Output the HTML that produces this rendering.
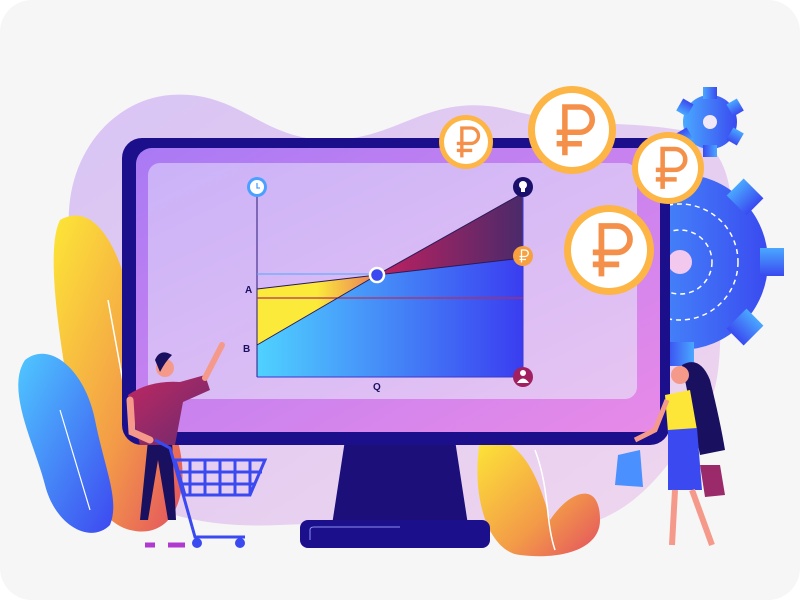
<!DOCTYPE html>
<html><head><meta charset="utf-8"><style>
html,body{margin:0;padding:0;background:#fff;width:800px;height:600px;overflow:hidden}
svg{display:block}
text{font-family:"Liberation Sans",sans-serif;font-weight:bold}
</style></head><body>
<svg width="800" height="600" viewBox="0 0 800 600" xmlns="http://www.w3.org/2000/svg">
<defs>
<linearGradient id="blob" x1="0" y1="0" x2="1" y2="1"><stop offset="0" stop-color="#d8c4f4"/><stop offset="1" stop-color="#f0d6ee"/></linearGradient>
<linearGradient id="yl" x1="0" y1="0" x2="1" y2="1"><stop offset="0" stop-color="#fde637"/><stop offset="0.6" stop-color="#f39a48"/><stop offset="1" stop-color="#e35060"/></linearGradient>
<linearGradient id="bl" x1="0" y1="0" x2="1" y2="1"><stop offset="0" stop-color="#4fc8ff"/><stop offset="1" stop-color="#3d48f0"/></linearGradient>
<linearGradient id="scr" x1="0" y1="0" x2="1" y2="1"><stop offset="0" stop-color="#cbb2f8"/><stop offset="1" stop-color="#e6c4f2"/></linearGradient>
<linearGradient id="frm" x1="0" y1="0" x2="1" y2="1"><stop offset="0" stop-color="#a97af5"/><stop offset="1" stop-color="#e88ae8"/></linearGradient>
<linearGradient id="area" x1="0" y1="0" x2="1" y2="0"><stop offset="0" stop-color="#4fd2ff"/><stop offset="1" stop-color="#3a3df0"/></linearGradient>
<linearGradient id="yel" x1="0" y1="0" x2="1" y2="0"><stop offset="0" stop-color="#fbea3a"/><stop offset="0.5" stop-color="#fbea3a"/><stop offset="1" stop-color="#ea7a5a"/></linearGradient>
<linearGradient id="mag" x1="0" y1="0" x2="1" y2="0"><stop offset="0" stop-color="#c02060"/><stop offset="1" stop-color="#4a2a6a"/></linearGradient>
<linearGradient id="gear" x1="0" y1="0" x2="1" y2="0"><stop offset="0" stop-color="#4aa8ff"/><stop offset="1" stop-color="#3a4af0"/></linearGradient>
<linearGradient id="shirt" x1="0" y1="0" x2="1" y2="1"><stop offset="0" stop-color="#c02860"/><stop offset="1" stop-color="#6a2a70"/></linearGradient>
<path id="rub" d="M-0.22 0.55 V-0.5 H0.1 A0.27 0.27 0 0 1 0.1 0.05 H-0.4 M-0.4 0.3 H0.15" fill="none" stroke="#f5904a" stroke-width="0.12"/>
</defs>
<rect width="800" height="600" rx="32" fill="#f6f6f6"/>
<path d="M70 240 C60 160 110 100 170 95 C240 90 260 140 330 140 C400 140 430 90 510 110 C580 128 620 120 680 130 C730 140 740 200 725 260 C715 320 730 380 700 420 C670 460 640 520 560 530 C480 540 380 520 280 525 C180 530 90 500 70 420 C55 360 78 300 70 240Z" fill="url(#blob)"/>
<path d="M60 220 C95 200 120 250 130 300 C140 360 170 400 180 450 C190 500 170 540 130 530 C90 520 80 460 70 400 C60 340 45 250 60 220Z" fill="url(#yl)"/>
<path d="M108 300 L130 420" stroke="#fff" stroke-width="1.5" fill="none"/>
<path d="M25 360 C50 340 85 370 95 420 C105 470 120 500 110 525 C90 545 55 525 45 485 C35 445 5 390 25 360Z" fill="url(#bl)"/>
<path d="M60 410 L90 510" stroke="#fff" stroke-width="1.2" fill="none"/>
<path d="M480 440 C520 430 540 480 550 520 C570 490 600 480 600 520 C600 550 560 560 520 555 C490 552 470 500 480 440Z" fill="url(#yl)"/>
<path d="M535 450 C550 490 545 520 555 550" stroke="#fff" stroke-width="1.5" fill="none"/>
<g transform="translate(680,262)">
<circle r="88" fill="url(#gear)"/>
<g fill="url(#gear)">
<rect x="-14" y="-104" width="28" height="24"/><rect x="-14" y="-104" width="28" height="24" transform="rotate(45)"/><rect x="-14" y="-104" width="28" height="24" transform="rotate(90)"/><rect x="-14" y="-104" width="28" height="24" transform="rotate(135)"/><rect x="-14" y="-104" width="28" height="24" transform="rotate(180)"/>
</g>
<circle r="58" fill="none" stroke="#fff" stroke-width="1.5" stroke-dasharray="5 4"/>
<circle r="32" fill="none" stroke="#fff" stroke-width="1.5" stroke-dasharray="5 4"/>
<circle r="12" fill="#f3c8ef"/>
</g>
<g transform="translate(710,122)">
<circle r="27" fill="url(#gear)"/>
<g fill="url(#gear)"><rect x="-7" y="-35" width="14" height="12"/><rect x="-7" y="-35" width="14" height="12" transform="rotate(60)"/><rect x="-7" y="-35" width="14" height="12" transform="rotate(120)"/><rect x="-7" y="-35" width="14" height="12" transform="rotate(180)"/><rect x="-7" y="-35" width="14" height="12" transform="rotate(240)"/><rect x="-7" y="-35" width="14" height="12" transform="rotate(300)"/></g>
<circle r="7" fill="#f0e8f8"/>
</g>
<path d="M345 440 L455 440 L468 525 L332 525Z" fill="#1c0f7a"/>
<rect x="300" y="520" width="190" height="28" rx="8" fill="#1c0f8c"/>
<path d="M310 540 L310 530 Q310 527 314 527 L400 527" stroke="#8a8ff0" stroke-width="1" fill="none"/>
<rect x="122" y="138" width="548" height="307" rx="20" fill="#1c0f8c"/>
<rect x="136" y="148" width="524" height="284" rx="16" fill="url(#frm)"/>
<rect x="148" y="163" width="489" height="236" rx="12" fill="url(#scr)"/>
<polygon points="257,345 377,275 523,258 523,377 257,377" fill="url(#area)"/>
<polygon points="257,289 377,275 257,345" fill="url(#yel)"/>
<polygon points="377,275 523,193 523,258" fill="url(#mag)"/>
<line x1="257" y1="187" x2="257" y2="377" stroke="#2a1a7a" stroke-width="1"/>
<line x1="257" y1="377" x2="523" y2="377" stroke="#3a3ad0" stroke-width="1"/>
<line x1="523" y1="190" x2="523" y2="377" stroke="#3a3ad0" stroke-width="1"/>
<line x1="257" y1="298" x2="523" y2="298" stroke="#b03060" stroke-width="1.2"/>
<line x1="257" y1="274" x2="377" y2="274" stroke="#4fa8ff" stroke-width="1"/>
<line x1="257" y1="289" x2="377" y2="275" stroke="#2a1a5a" stroke-width="1"/>
<line x1="257" y1="345" x2="377" y2="275" stroke="#2a1a5a" stroke-width="1"/>
<line x1="377" y1="275" x2="523" y2="193" stroke="#2a1a5a" stroke-width="1"/>
<line x1="377" y1="275" x2="523" y2="258" stroke="#2a1a5a" stroke-width="1"/>
<circle cx="377" cy="275" r="7" fill="#3a4af0" stroke="#fff" stroke-width="2.5"/>
<circle cx="257" cy="187" r="10" fill="#4aa0ff"/><circle cx="257" cy="187" r="7" fill="#fff"/><path d="M257 183 V188 H260" stroke="#4aa0ff" stroke-width="1.3" fill="none"/>
<circle cx="523" cy="187" r="10" fill="#1a0f6a"/><circle cx="523" cy="185" r="4" fill="#fff"/><rect x="521" y="188" width="4" height="4" fill="#fff"/>
<circle cx="523" cy="256" r="10" fill="#f7a040"/>
<path d="M521.5 262.5 V250 H525 A3.2 3.2 0 0 1 525 256.5 H519.5 M519.5 259.5 H526" fill="none" stroke="#fff" stroke-width="1.3"/>
<circle cx="523" cy="377" r="10" fill="#a02060"/><circle cx="523" cy="373" r="3" fill="#fff"/><path d="M517 383 Q523 374 529 383Z" fill="#fff"/>
<text x="245" y="293" font-size="10" fill="#1a1060">A</text>
<text x="243" y="352" font-size="10" fill="#1a1060">B</text>
<text x="373" y="390" font-size="10" fill="#1a1060">Q</text>
<circle cx="466" cy="142" r="27" fill="#fdb545"/><circle cx="466" cy="142" r="22" fill="#fff"/><use href="#rub" transform="translate(468,142) scale(28)"/>
<circle cx="572" cy="130" r="44" fill="#fdb545"/><circle cx="572" cy="130" r="37" fill="#fff"/><use href="#rub" transform="translate(575,130) scale(46)"/>
<circle cx="668" cy="168" r="36" fill="#fdb545"/><circle cx="668" cy="168" r="30" fill="#fff"/><use href="#rub" transform="translate(671,168) scale(38)"/>
<circle cx="609" cy="250" r="45" fill="#fdb545"/><circle cx="609" cy="250" r="38" fill="#fff"/><use href="#rub" transform="translate(612,250) scale(48)"/>
<path d="M148 440 L140 520 L148 520 L158 460 L168 520 L176 520 L172 440Z" fill="#1a1060"/>
<path d="M128 395 Q150 380 180 382 L205 375 L210 390 L183 402 L175 445 L140 445Z" fill="url(#shirt)"/>
<path d="M205 378 L222 345" stroke="#f59a8a" stroke-width="6" stroke-linecap="round"/>
<circle cx="165" cy="368" r="9" fill="#f59a8a"/>
<path d="M155 360 Q160 348 172 355 Q165 362 160 372Z" fill="#1a1060"/>
<path d="M130 400 L132 432 L150 440" stroke="#f59a8a" stroke-width="7" fill="none" stroke-linecap="round"/>
<path d="M145 545 L155 545 M168 545 L185 545" stroke="#b03ad0" stroke-width="5"/>
<g stroke="#3a4af0" stroke-width="3" fill="none">
<path d="M155 440 L170 448 L195 537 L245 537"/>
<path d="M175 460 L265 460 L250 495 L185 495Z"/>
<path d="M178 472 L262 472 M181 484 L256 484 M190 460 V495 M205 460 V495 M220 460 V495 M235 460 V495 M250 460 V495"/>
</g>
<circle cx="197" cy="543" r="5" fill="#3a4af0"/><circle cx="240" cy="543" r="5" fill="#3a4af0"/>
<path d="M682 365 Q700 355 710 380 Q720 420 725 450 L700 455Z" fill="#1a1060"/>
<circle cx="680" cy="375" r="9" fill="#f59a8a"/>
<path d="M665 395 L690 390 L697 430 L668 432Z" fill="#fde637"/>
<path d="M668 430 L697 428 L702 490 L668 490Z" fill="#3a4af0"/>
<path d="M675 490 L672 545 M692 490 L712 545" stroke="#f59a8a" stroke-width="6"/>
<path d="M667 400 L655 430 L635 440" stroke="#f59a8a" stroke-width="5" fill="none"/>
<path d="M618 455 L640 450 L643 487 L615 485Z" fill="#4a90ff"/>
<path d="M700 465 L720 465 L725 495 L705 497Z" fill="#9a2a6a"/>
</svg>
</body></html>
